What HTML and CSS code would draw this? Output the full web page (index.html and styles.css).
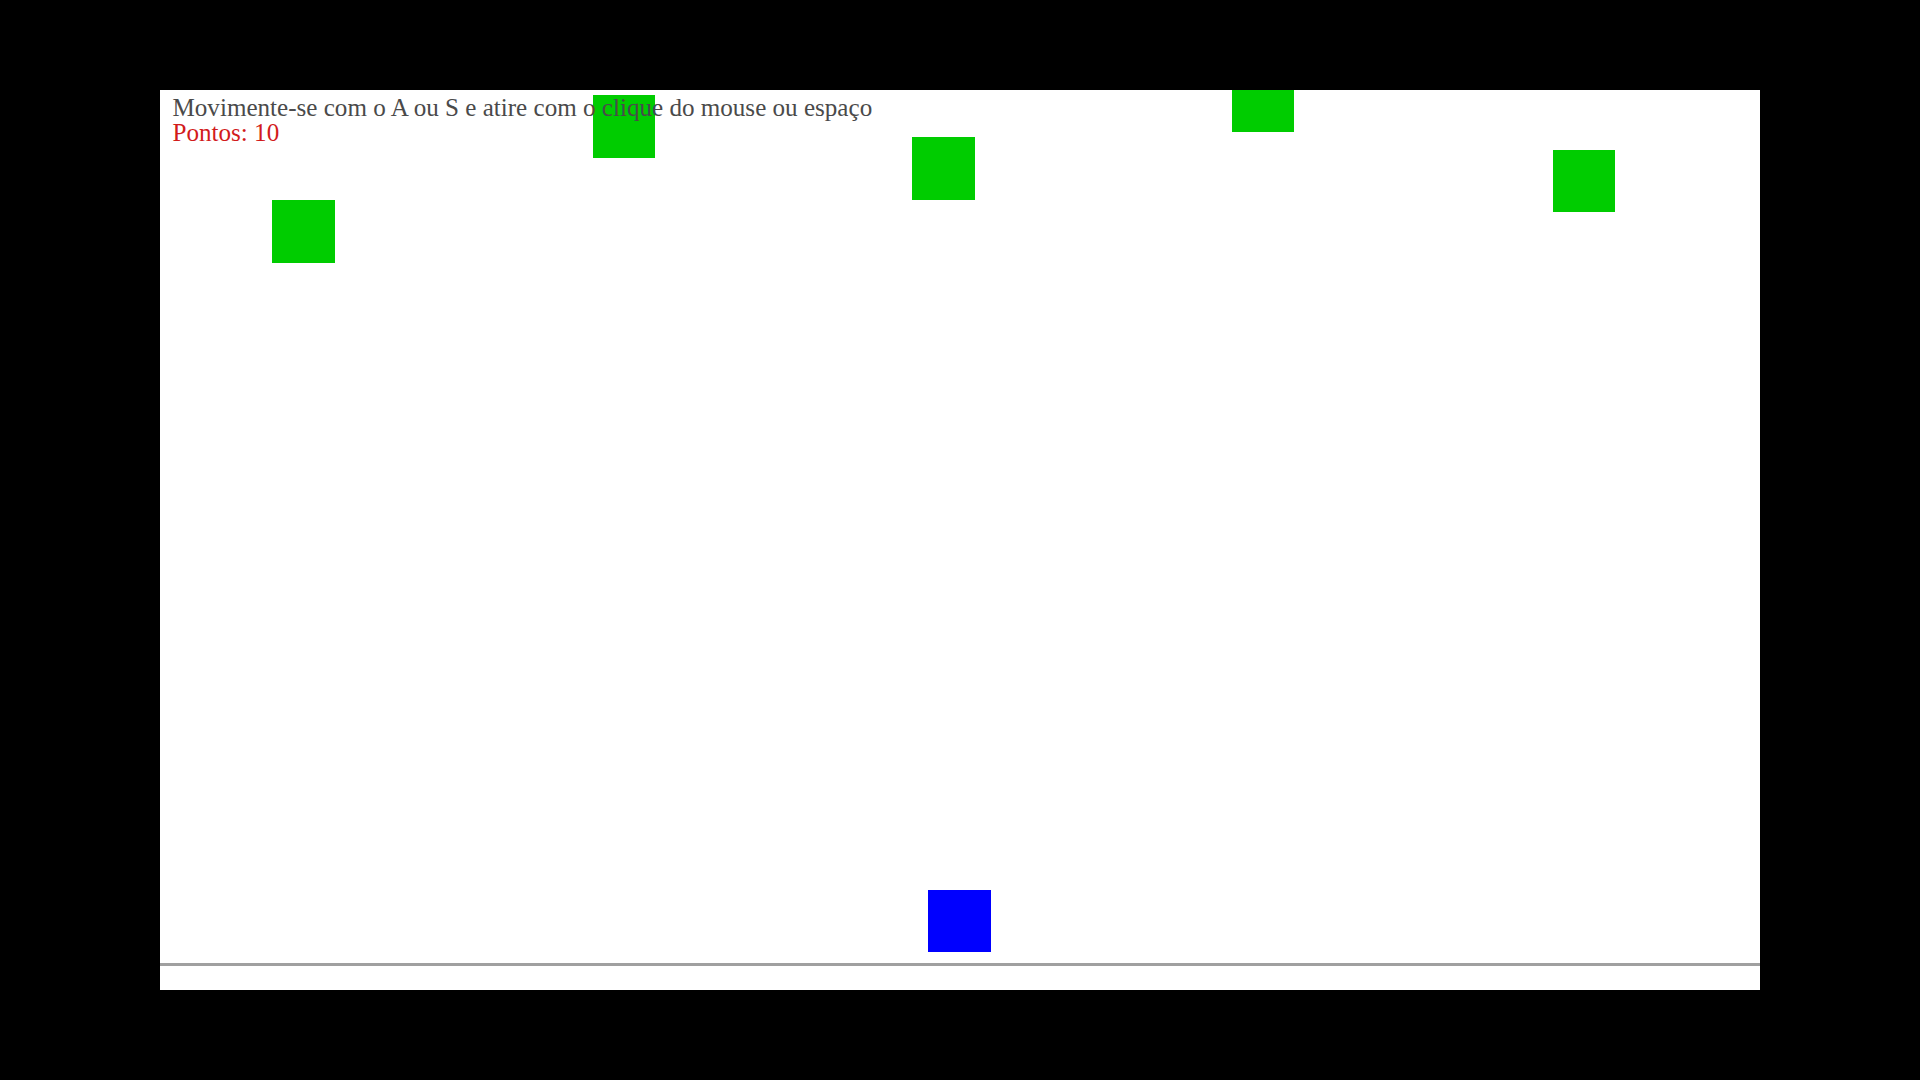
FILE: index.html
```html
<!DOCTYPE html>
<html lang="pt">
<head>
<meta charset="utf-8">
<title>Jogo</title>
<link rel="stylesheet" href="styles.css">
</head>
<body>
<div class="stage">
  <div class="enemy e1"></div>
  <div class="enemy e2"></div>
  <div class="enemy e3"></div>
  <div class="enemy e4"></div>
  <div class="enemy e5"></div>
  <div class="player"></div>
  <div class="ground"></div>
  <div class="hud">
    <div class="help">Movimente-se com o A ou S e atire com o clique do mouse ou espaço</div>
    <div class="score">Pontos: 10</div>
  </div>
</div>
</body>
</html>
```

FILE: styles.css
```css
html, body {
  margin: 0;
  padding: 0;
  height: 100%;
  background: #000;
}
body {
  display: flex;
  align-items: center;
  justify-content: center;
  font-family: "Liberation Serif", "Times New Roman", serif;
}
.stage {
  position: relative;
  width: 1600px;
  height: 900px;
  background: #fff;
  overflow: hidden;
}
.hud {
  position: relative;
  z-index: 2;
  padding: 4.6px 0 0 12.5px;
  font-size: 25.1px;
  line-height: 25.6px;
}
.help { color: #4a4a4a; }
.score { color: #d21b1b; }
.enemy, .player {
  position: absolute;
  width: 62.5px;
  height: 62.5px;
}
.enemy { background: #00cc00; }
.player { background: #0000ff; left: 768.3px; top: 799.7px; }
.e1 { left: 112.3px; top: 110px; }
.e2 { left: 432.7px; top: 5px; }
.e3 { left: 752.1px; top: 47.3px; }
.e4 { left: 1071.9px; top: -20.2px; }
.e5 { left: 1392.8px; top: 59.7px; }
.ground {
  position: absolute;
  left: 0;
  right: 0;
  top: 873.3px;
  height: 2.7px;
  background: #a0a0a0;
}
```
